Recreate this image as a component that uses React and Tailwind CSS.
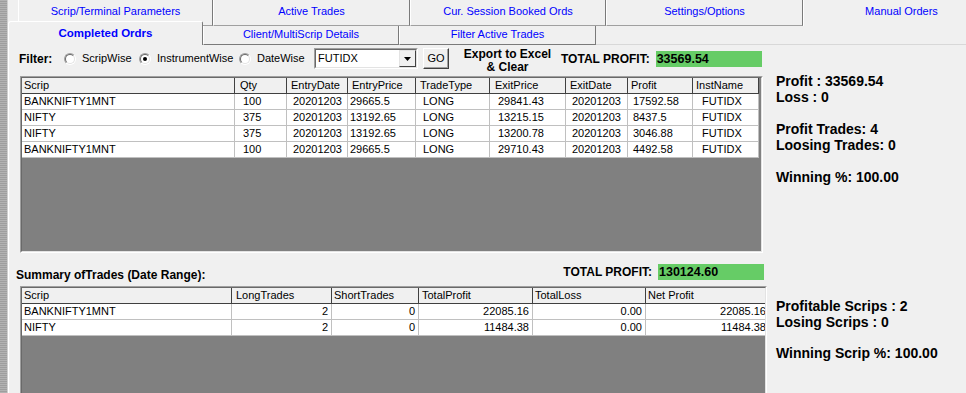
import React from "react";

const N = "font-['Liberation_Sans',sans-serif]";

function Radio({ checked }) {
  return (
    <div className="w-[12px] h-[12px] shrink-0 rounded-full border border-t-[#a0a0a0] border-l-[#a0a0a0] border-b-white border-r-white">
      <div className="w-full h-full rounded-full bg-white border border-t-[#696969] border-l-[#696969] border-b-[#e3e3e3] border-r-[#e3e3e3] flex items-center justify-center">
        {checked && <div className="w-[4px] h-[4px] rounded-full bg-black" />}
      </div>
    </div>
  );
}

function Frame({ className, children }) {
  return (
    <div className={"border border-t-[#a0a0a0] border-l-[#a0a0a0] border-b-white border-r-white " + className}>
      <div className="w-full h-full border border-t-[#696969] border-l-[#696969] border-b-[#e3e3e3] border-r-[#e3e3e3] bg-[#808080] overflow-hidden">
        {children}
      </div>
    </div>
  );
}

const cols1 = [
  { w: "w-[213px]", hp: "pl-[2px]", dp: "pl-[2px]", h: "Scrip" },
  { w: "w-[52px]", hp: "pl-[5px]", dp: "pl-[8px]", h: "Qty" },
  { w: "w-[61px]", hp: "pl-[4px]", dp: "pl-[6px]", h: "EntryDate" },
  { w: "w-[68px]", hp: "pl-[4px]", dp: "pl-[2px]", h: "EntryPrice" },
  { w: "w-[74px]", hp: "pl-[4px]", dp: "pl-[7px]", h: "TradeType" },
  { w: "w-[76px]", hp: "pl-[5px]", dp: "pl-[8px]", h: "ExitPrice" },
  { w: "w-[62px]", hp: "pl-[4px]", dp: "pl-[6px]", h: "ExitDate" },
  { w: "w-[65px]", hp: "pl-[3px]", dp: "pl-[5px]", h: "Profit" },
  { w: "w-[66px]", hp: "pl-[3px]", dp: "pl-[9px]", h: "InstName" },
];

const rows1 = [
  ["BANKNIFTY1MNT", "100", "20201203", "29665.5", "LONG", "29841.43", "20201203", "17592.58", "FUTIDX"],
  ["NIFTY", "375", "20201203", "13192.65", "LONG", "13215.15", "20201203", "8437.5", "FUTIDX"],
  ["NIFTY", "375", "20201203", "13192.65", "LONG", "13200.78", "20201203", "3046.88", "FUTIDX"],
  ["BANKNIFTY1MNT", "100", "20201203", "29665.5", "LONG", "29710.43", "20201203", "4492.58", "FUTIDX"],
];

const cols2 = [
  { w: "w-[210px]", hp: "pl-[2px]", dp: "pl-[2px]", h: "Scrip" },
  { w: "w-[100px]", hp: "pl-[4px]", dp: "pr-[3px] text-right", h: "LongTrades" },
  { w: "w-[87px]", hp: "pl-[2px]", dp: "pr-[3px] text-right", h: "ShortTrades" },
  { w: "w-[114px]", hp: "pl-[3px]", dp: "pr-[3px] text-right", h: "TotalProfit" },
  { w: "w-[113px]", hp: "pl-[2px]", dp: "pr-[3px] text-right", h: "TotalLoss" },
  { w: "w-[124px]", hp: "pl-[2px]", dp: "pr-[3px] text-right", h: "Net Profit" },
];

const rows2 = [
  ["BANKNIFTY1MNT", "2", "0", "22085.16", "0.00", "22085.16"],
  ["NIFTY", "2", "0", "11484.38", "0.00", "11484.38"],
];

function Grid({ cols, rows }) {
  return (
    <div className={"flex flex-col text-[11px] text-black " + N}>
      <div className="flex h-[16px] shrink-0">
        {cols.map((c, i) => (
          <div
            key={i}
            className={
              c.w +
              " " +
              c.hp +
              " shrink-0 h-full bg-[#f0f0f0] border-r border-b border-r-[#404040] border-b-[#404040] leading-[15px] whitespace-nowrap overflow-hidden"
            }
          >
            {c.h}
          </div>
        ))}
      </div>
      {rows.map((r, ri) => (
        <div key={ri} className="flex h-[16px] shrink-0">
          {r.map((v, i) => (
            <div
              key={i}
              className={
                cols[i].w +
                " " +
                cols[i].dp +
                " shrink-0 h-full bg-white border-r border-b border-[#c0c0c0] leading-[15px] whitespace-nowrap overflow-hidden"
              }
            >
              {v}
            </div>
          ))}
        </div>
      ))}
    </div>
  );
}

function TopTab({ w, children, noBottom }) {
  return (
    <div
      className={
        w +
        " shrink-0 h-full border-l border-l-white border-r border-r-[#7a7a7a] flex items-center justify-center pb-[3px] text-[#0000ff] text-[11px] whitespace-nowrap " +
        N +
        (noBottom ? " border-r-transparent" : " border-b border-b-[#a0a0a0]")
      }
    >
      {children}
    </div>
  );
}

function Tab2({ w, children }) {
  return (
    <div
      className={
        w +
        " shrink-0 h-[19px] border-l border-l-white border-r border-r-[#7a7a7a] border-b border-b-[#7a7a7a] flex items-center justify-center pb-[2px] text-[#0000ff] text-[11px] whitespace-nowrap " +
        N
      }
    >
      {children}
    </div>
  );
}

export default function App() {
  return (
    <div className="w-[966px] h-[393px] overflow-hidden bg-[#f0f0f0] flex font-['Liberation_Sans',sans-serif] text-black">
      <div className="w-[7px] shrink-0 h-full bg-[repeating-linear-gradient(0deg,#b2b2b2_0px,#b2b2b2_1px,#9e9e9e_1px,#9e9e9e_2px)]" />
      <div className="w-[1px] shrink-0 h-full bg-[#cfcfcf]" />
      <div className="flex-1 min-w-0 flex flex-col">
        {/* tab row 1 */}
        <div className="h-[26px] flex pl-[10px] shrink-0">
          <TopTab w="w-[195px]">Scrip/Terminal Parameters</TopTab>
          <TopTab w="w-[197px]">Active Trades</TopTab>
          <TopTab w="w-[196px]">Cur. Session Booked Ords</TopTab>
          <TopTab w="w-[197px]">Settings/Options</TopTab>
          <TopTab w="w-[197px]" noBottom>
            Manual Orders
          </TopTab>
        </div>
        {/* tab row 2 */}
        <div className="h-[19px] flex items-end shrink-0">
          <div
            className={
              "w-[195px] h-[24px] shrink-0 bg-[#f0f0f0] border-l border-t border-l-white border-t-white border-r border-r-[#7a7a7a] rounded-tl-[3px] rounded-tr-[2px] flex items-center justify-center font-bold text-[11.5px] text-[#0000ff] " +
              N
            }
          >
            Completed Ordrs
          </div>
          <Tab2 w="w-[196px]">Client/MultiScrip Details</Tab2>
          <Tab2 w="w-[197px]">Filter Active Trades</Tab2>
          <div className="flex-1 h-[19px] border-b border-b-[#d8d8d8]" />
        </div>
        {/* panel */}
        <div className="flex-1 min-h-0 flex border-l border-l-white">
          <div className="w-[759px] shrink-0 flex flex-col">
            {/* filter row */}
            <div className="h-[27px] shrink-0 flex items-center pl-[10px]">
              <span className="w-[45px] shrink-0 font-bold text-[12px]">Filter:</span>
              <div className="w-[75px] shrink-0 flex items-center">
                <Radio />
                <span className={"ml-[6px] text-[11px] " + N}>ScripWise</span>
              </div>
              <div className="w-[100px] shrink-0 flex items-center">
                <Radio checked />
                <span className={"ml-[6px] text-[11px] " + N}>InstrumentWise</span>
              </div>
              <div className="w-[75px] shrink-0 flex items-center">
                <Radio />
                <span className={"ml-[6px] text-[11px] " + N}>DateWise</span>
              </div>
              <div className="w-[104px] h-[21px] shrink-0 bg-white border border-t-[#a0a0a0] border-l-[#a0a0a0] border-b-white border-r-white">
                <div className="h-full border border-t-[#696969] border-l-[#696969] border-b-[#e3e3e3] border-r-[#e3e3e3] flex items-center">
                  <span className={"flex-1 pl-[2px] text-[11px] leading-[17px] " + N}>FUTIDX</span>
                  <div className="w-[17px] h-full bg-[#f0f0f0] border border-t-[#e3e3e3] border-l-[#e3e3e3] border-b-[#404040] border-r-[#404040] flex items-center justify-center">
                    <svg width="7" height="4" viewBox="0 0 7 4">
                      <path d="M0 0H7L3.5 4Z" fill="#000" />
                    </svg>
                  </div>
                </div>
              </div>
              <div
                className={
                  "ml-[5px] w-[26px] h-[21px] shrink-0 bg-[#f0f0f0] border border-t-white border-l-white border-b-[#404040] border-r-[#404040] shadow-[inset_-1px_-1px_0_#a0a0a0] flex items-center justify-center text-[11px] " +
                  N
                }
              >
                GO
              </div>
              <div className="ml-[6px] mt-[4px] w-[105px] shrink-0 text-center font-bold text-[12px] leading-[13px]">
                Export to Excel
                <br />
                &amp; Clear
              </div>
              <span className="ml-[1px] shrink-0 font-bold text-[12px] whitespace-nowrap">TOTAL PROFIT:</span>
              <div className="ml-[6px] w-[106px] h-[16px] shrink-0 bg-[#66cc66] pl-[1px] font-bold text-[12.5px] leading-[16px]">
                33569.54
              </div>
            </div>
            {/* grid 1 */}
            <Frame className="ml-[11px] mt-[4px] w-[743px] h-[177px] shrink-0">
              <Grid cols={cols1} rows={rows1} />
            </Frame>
            {/* summary row */}
            <div className="h-[33px] shrink-0 flex items-end justify-between pb-[5px] pl-[7px] pr-[4px]">
              <span className="font-bold text-[12px] leading-[12px] whitespace-nowrap">Summary ofTrades (Date Range):</span>
              <div className="flex items-center">
                <span className="font-bold text-[12px] whitespace-nowrap">TOTAL PROFIT:</span>
                <div className="ml-[6px] w-[106px] h-[16px] bg-[#66cc66] pl-[1px] font-bold text-[12.5px] leading-[16px]">
                  130124.60
                </div>
              </div>
            </div>
            {/* grid 2 */}
            <Frame className="ml-[11px] w-[747px] h-[120px] shrink-0">
              <Grid cols={cols2} rows={rows2} />
            </Frame>
          </div>
          {/* right panel */}
          <div className="flex-1 pl-[8px] pt-[28px] font-bold text-[14px] leading-[16px] whitespace-nowrap">
            <div>Profit : 33569.54</div>
            <div>Loss : 0</div>
            <div className="mt-[16px]">Profit Trades: 4</div>
            <div>Loosing Trades: 0</div>
            <div className="mt-[16px]">Winning %: 100.00</div>
            <div className="mt-[113px]">Profitable Scrips : 2</div>
            <div>Losing Scrips : 0</div>
            <div className="mt-[15px]">Winning Scrip %: 100.00</div>
          </div>
        </div>
      </div>
    </div>
  );
}
